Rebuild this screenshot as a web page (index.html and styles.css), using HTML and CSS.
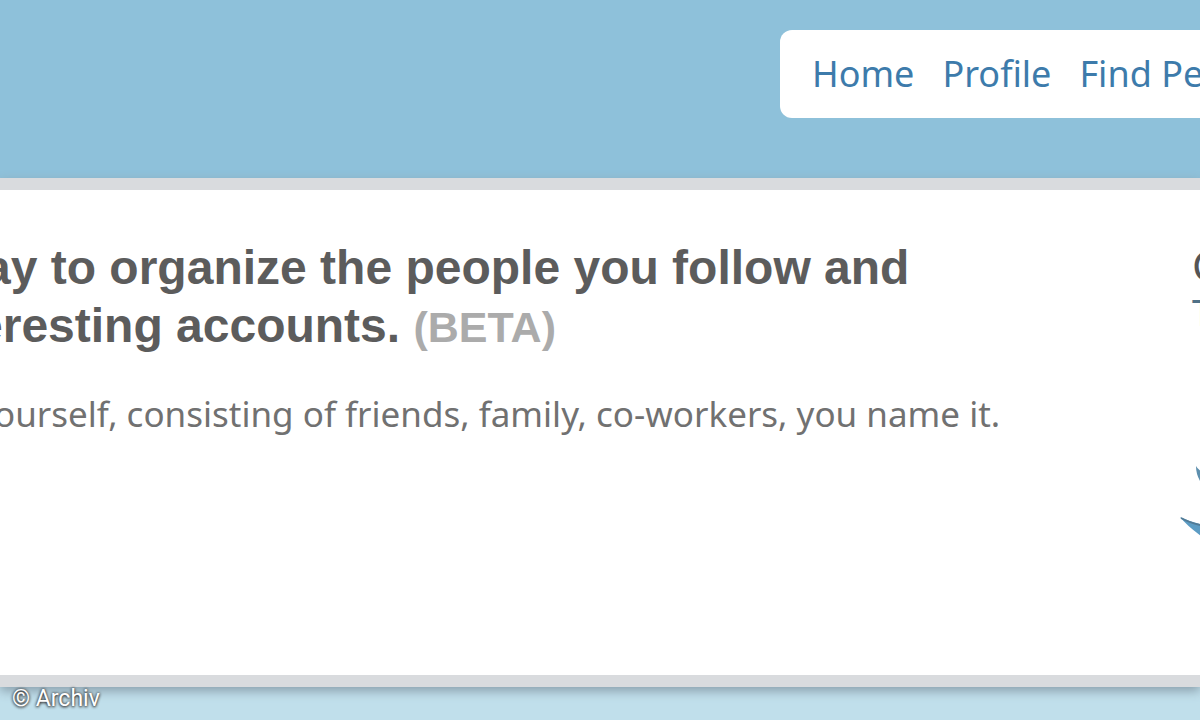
FILE: index.html
```html
<!DOCTYPE html>
<html lang="en">
<head>
<meta charset="utf-8">
<title>Lists</title>
<link rel="stylesheet" href="styles.css">
</head>
<body>
<header class="header">
  <nav class="nav">
    <a href="#">Home</a>
    <a href="#">Profile</a>
    <a href="#">Find Pe</a>
  </nav>
</header>
<main class="panel">
  <section class="intro">
    <h1 class="title">
      <span class="line">ay to organize the people you follow and</span>
      <span class="line line-second">eresting accounts. <span class="beta">(BETA)</span></span>
    </h1>
    <p class="lead">ourself, consisting of friends, family, co-workers, you name it.</p>
  </section>
  <aside class="side">
    <p class="side-title">C</p>
    <p class="side-text">T</p>
    <svg class="bird" viewBox="0 0 24 80" aria-hidden="true">
      <path d="M16 5 Q16 13 20 20 L24 26 V12 Q18 9 16 5Z" fill="#5d8fae"/>
      <path d="M0 56 Q10 61 24 64 V77 Q8 66 0 56Z" fill="#5c9cc4"/>
      <path d="M1 57 Q10 62 24 65" fill="none" stroke="#527b96" stroke-width="2"/>
    </svg>
  </aside>
</main>
<footer class="footer">© Archiv</footer>
</body>
</html>
```
FILE: styles.css
```css
* { box-sizing: border-box; }
body {
  margin: 0;
  min-height: 100vh;
  display: flex;
  flex-direction: column;
  overflow: hidden;
  background: #c0dfeb;
  font-family: "Noto Sans", "Open Sans", sans-serif;
}
h1, p { margin: 0; }
.header {
  display: flex;
  justify-content: flex-end;
  padding: 30px 0 60px;
  background: #8ec1da;
}
.nav {
  display: flex;
  gap: 28px;
  width: 35%;
  padding: 20px 0 20px 32px;
  overflow: hidden;
  border-radius: 12px 0 0 12px;
  background: #fff;
  white-space: nowrap;
}
.nav a {
  color: #3d7bab;
  font-size: 36px;
  line-height: 48px;
  text-decoration: none;
}
.panel {
  display: flex;
  border: solid #d9dbde;
  border-width: 12px 0;
  background: #fff;
  box-shadow: 0 4px 10px #8a9fac;
}
.intro {
  flex: 1;
  min-width: 0;
  padding: 49px 0 232px;
  overflow: hidden;
  white-space: nowrap;
}
.title {
  color: #5c5c5c;
  font-family: "Liberation Sans", Arial, sans-serif;
  font-size: 48px;
  font-weight: bold;
  line-height: 58px;
}
.line { display: block; margin-left: -16px; }
.line-second { margin-left: -24px; }
.beta { color: #ababab; font-size: 43px; }
.lead {
  margin: 29px 0 0 -6px;
  color: #717171;
  font-size: 35px;
  line-height: 58px;
}
.side {
  width: 20px;
  padding-top: 49px;
  overflow: hidden;
}
.side-title, .side-text { padding-left: 12px; color: #555; }
.side-title { font-size: 42px; line-height: 52px; }
.side-text { color: #4f7187; font-size: 36px; line-height: 44px; }
.bird { display: block; width: 24px; height: 80px; margin-top: 126px; }
.footer {
  position: relative;
  flex: 1;
  padding-left: 12px;
  color: #fff;
  font-family: Roboto, sans-serif;
  font-size: 23px;
  line-height: 24px;
  text-shadow: 0 1px 3px #333, 0 0 3px #333;
}
```
